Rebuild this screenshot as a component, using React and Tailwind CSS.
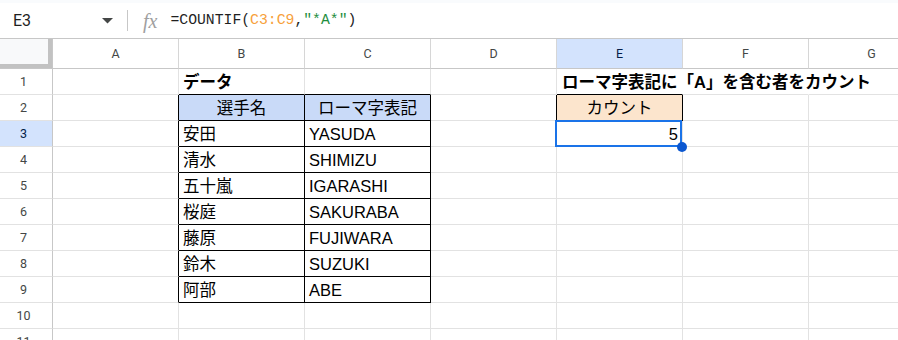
import React from "react";

const COLS = ["A", "B", "C", "D", "E", "F", "G"];

const names = [
  ["安田", "YASUDA"],
  ["清水", "SHIMIZU"],
  ["五十嵐", "IGARASHI"],
  ["桜庭", "SAKURABA"],
  ["藤原", "FUJIWARA"],
  ["鈴木", "SUZUKI"],
  ["阿部", "ABE"],
];

function Cell({ r, c, children, extra = "", rb = "grid", bb = "grid", inner }) {
  const rbc =
    rb === "black" ? "border-r-black" : rb === "none" ? "border-r-transparent" : "border-r-[#e2e2e2]";
  const bbc = bb === "black" ? "border-b-black" : "border-b-[#e2e2e2]";
  return (
    <div className={`relative flex h-[26px] items-end overflow-visible border-r border-b pb-[2px] ${rbc} ${bbc} ${extra}`}>
      {children}
      {inner}
    </div>
  );
}

function cellProps(r, ci) {
  const col = COLS[ci];
  let p = { children: null, extra: "", rb: "grid", bb: "grid" };
  if (r === 1) {
    if (col === "B") {
      p.children = <span className="pl-[4px] font-bold whitespace-nowrap">データ</span>;
      p.bb = "black";
    }
    if (col === "C") p.bb = "black";
    if (col === "E") {
      p.children = (
        <span className="relative z-10 pl-[5px] font-bold whitespace-nowrap">ローマ字表記に「A」を含む者をカウント</span>
      );
      p.bb = "black";
      p.rb = "none";
    }
    if (col === "F") p.rb = "none";
  }
  if (r === 2) {
    if (col === "D") p.rb = "black";
    if (col === "B") {
      p.children = <span className="w-full text-center">選手名</span>;
      p.extra = "bg-[#c9daf8]";
    }
    if (col === "C") {
      p.children = <span className="w-full text-center">ローマ字表記</span>;
      p.extra = "bg-[#c9daf8]";
    }
    if (col === "E") {
      p.children = <span className="w-full text-center">カウント</span>;
      p.extra = "bg-[#fce5cd]";
      p.rb = "black";
      p.bb = "black";
    }
  }
  if (r >= 2 && r <= 9) {
    if (col === "A") p.rb = "black";
    if (col === "B" || col === "C") {
      p.rb = "black";
      p.bb = "black";
    }
    if (r >= 3) {
      if (col === "B") p.children = <span className="pl-[4px] whitespace-nowrap">{names[r - 3][0]}</span>;
      if (col === "C") p.children = <span className="pl-[4px] whitespace-nowrap">{names[r - 3][1]}</span>;
    }
  }
  if (r === 3 && col === "E") {
    p.children = <span className="w-full pr-[4px] text-right">5</span>;
    p.inner = (
      <>
        <div className="pointer-events-none absolute left-[-2px] top-[-1px] z-10 h-[27px] w-[127px] border-2 border-[#1a73e8]" />
        <div className="absolute left-[120px] top-[21px] z-20 h-[10px] w-[10px] rounded-full bg-[#0b57d0]" />
      </>
    );
  }
  return p;
}

export default function App() {
  const rows = Array.from({ length: 11 }, (_, i) => i + 1);
  return (
    <div className="h-[340px] w-[898px] overflow-hidden bg-white font-['Liberation_Sans','Noto_Sans_CJK_JP',sans-serif] text-[16.5px] leading-[19px] text-black">
      <div className="h-[3px] bg-[#f9fbfd]" />
      {/* formula bar */}
      <div className="flex h-[36px] items-center border-b border-[#c7c7c7]">
        <div className="flex w-[127px] items-center">
          <span className="pl-[13px] font-['Roboto','Liberation_Sans',sans-serif] text-[16px] text-[#1f1f1f]">E3</span>
          <svg className="ml-auto mr-[14px]" width="11" height="6" viewBox="0 0 11 6">
            <path d="M0 0 L11 0 L5.5 5.5 Z" fill="#444746" />
          </svg>
        </div>
        <div className="h-[21px] w-px bg-[#c7c7c7]" />
        <span className="ml-[15px] font-['Liberation_Serif',serif] text-[20px] italic leading-none text-[#a0a0a0]">fx</span>
        <span className="ml-[13px] font-['Liberation_Mono',monospace] text-[14.75px] text-[#1f1f1f]">
          =COUNTIF(<span className="text-[#f7a13b]">C3:C9</span>,<span className="text-[#1e8e3e]">"*A*"</span>)
        </span>
      </div>
      {/* grid */}
      <div className="grid grid-cols-[53px_repeat(7,126px)]">
        {/* header row */}
        <div className="flex h-[30px] flex-col border-r border-b border-r-[#c7c7c7] border-b-[#c7c7c7]">
          <div className="flex-1 border-r-4 border-b-4 border-[#c2c2c2] bg-[#f8f9fa]" />
        </div>
        {COLS.map((c) => (
          <div
            key={c}
            className={`flex h-[30px] items-center justify-center border-r border-b border-r-[#d6d6d6] border-b-[#c7c7c7] font-['Roboto','Liberation_Sans',sans-serif] text-[12.5px] ${
              c === "E" ? "bg-[#d3e3fd] text-[#041e49]" : "bg-white text-[#444746]"
            }`}
          >
            {c}
          </div>
        ))}
        {rows.map((r) => (
          <React.Fragment key={r}>
            <div
              className={`flex h-[26px] items-center justify-center border-r border-b border-r-[#c7c7c7] border-b-[#e2e2e2] pr-[5px] font-['Roboto','Liberation_Sans',sans-serif] text-[12.5px] ${
                r === 3 ? "bg-[#d3e3fd] text-[#041e49]" : "text-[#444746]"
              }`}
            >
              {r}
            </div>
            {COLS.map((c, ci) => {
              const p = cellProps(r, ci);
              return (
                <Cell key={c} r={r} c={c} extra={p.extra} rb={p.rb} bb={p.bb} inner={p.inner}>
                  {p.children}
                </Cell>
              );
            })}
          </React.Fragment>
        ))}
      </div>
    </div>
  );
}
